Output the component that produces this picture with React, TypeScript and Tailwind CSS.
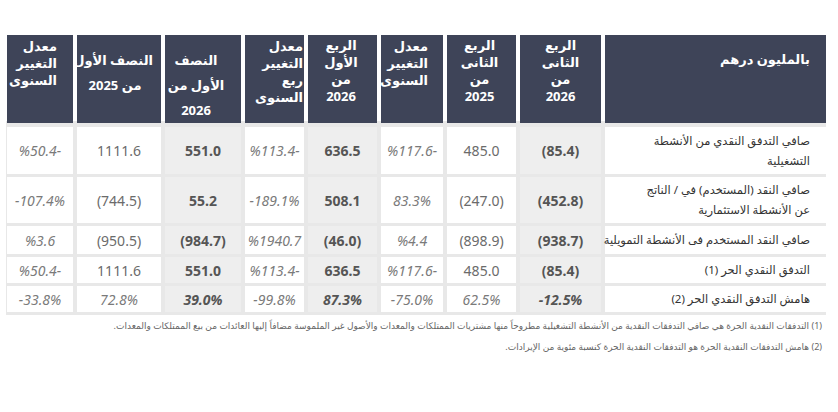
import React from "react";

type HeadCell = {
  lines: string[];
  className: string;
};

type Value = {
  text: string;
  kind: "plain" | "bold" | "italic" | "boldItalic";
};

type Row = {
  label: string[];
  height: string;
  values: Value[];
};

const cols = "grid grid-cols-[221px_81px_69px_62px_69px_59px_76px_84px_66px]";

// right to left, same order as the columns
const heads: HeadCell[] = [
  { lines: ["بالمليون درهم"], className: "pr-[16px] pt-[14px] text-right leading-[20px]" },
  { lines: ["الربع", "الثانى", "من", "2026"], className: "pt-[2px] text-center leading-[17px]" },
  { lines: ["الربع", "الثانى", "من", "2025"], className: "pt-[2px] pr-[4px] text-center leading-[17px]" },
  { lines: ["معدل", "التغيير", "السنوى"], className: "pt-[3px] pr-[15px] text-right leading-[17px]" },
  { lines: ["الربع", "الأول", "من", "2026"], className: "pt-[2px] pr-[3px] text-center leading-[17px]" },
  { lines: ["معدل", "التغيير", "ربع", "السنوى"], className: "pt-[3px] pr-[1px] text-right leading-[17px]" },
  { lines: ["النصف", "الأول من", "2026"], className: "pt-[13px] pr-[14px] text-center leading-[25px]" },
  { lines: ["النصف الأول", "من 2025"], className: "pt-[13px] pr-[8px] text-center leading-[25px]" },
  { lines: ["معدل", "التغيير", "السنوى"], className: "pt-[3px] pr-[16px] text-right leading-[17px]" },
];

// columns 1, 4 and 6 (2026 periods) are shaded
const shaded = [1, 4, 6];

const p = (text: string): Value => ({ text, kind: "plain" });
const b = (text: string): Value => ({ text, kind: "bold" });
const i = (text: string): Value => ({ text, kind: "italic" });
const bi = (text: string): Value => ({ text, kind: "boldItalic" });

const rows: Row[] = [
  {
    label: ["صافي التدفق النقدي من الأنشطة", "التشغيلية"],
    height: "h-[47px]",
    values: [b("(85.4)"), p("485.0"), i("%117.6-"), b("636.5"), i("%113.4-"), b("551.0"), p("1111.6"), i("%50.4-")],
  },
  {
    label: ["صافي النقد (المستخدم) في / الناتج", "عن الأنشطة الاستثمارية"],
    height: "h-[46px]",
    values: [b("(452.8)"), p("(247.0)"), i("83.3%"), b("508.1"), i("-189.1%"), b("55.2"), p("(744.5)"), i("-107.4%")],
  },
  {
    label: ["صافي النقد المستخدم فى الأنشطة التمويلية"],
    height: "h-[28px]",
    values: [b("(938.7)"), p("(898.9)"), i("%4.4"), b("(46.0)"), i("%1940.7"), b("(984.7)"), p("(950.5)"), i("%3.6")],
  },
  {
    label: ["التدفق النقدي الحر (1)"],
    height: "h-[26px]",
    values: [b("(85.4)"), p("485.0"), i("%117.6-"), b("636.5"), i("%113.4-"), b("551.0"), p("1111.6"), i("%50.4-")],
  },
  {
    label: ["هامش التدفق النقدي الحر (2)"],
    height: "h-[26px]",
    values: [bi("-12.5%"), i("62.5%"), i("-75.0%"), bi("87.3%"), i("-99.8%"), bi("39.0%"), i("72.8%"), i("-33.8%")],
  },
];

const valueStyle: Record<Value["kind"], string> = {
  plain: "text-[#6b6b6b]",
  bold: "font-bold text-[#555555]",
  italic: "italic text-[#7a7a7a]",
  boldItalic: "font-bold italic text-[#555555]",
};

export default function App() {
  return (
    <div
      dir="rtl"
      className="w-[838px] h-[412px] bg-white pt-[35px] pl-[6px] pr-[12px]"
      style={{ fontFamily: '"Noto Sans", "DejaVu Sans", sans-serif' }}
    >
      <div className="w-[820px]">
        <div className={`${cols} gap-x-[4px] h-[86px]`}>
          {heads.map((h, idx) => (
            <div key={idx} className={`bg-[#3e4458] text-white font-bold text-[13px] ${h.className}`}>
              {h.lines.map((line, j) => (
                <div key={j} className="whitespace-nowrap">{line}</div>
              ))}
            </div>
          ))}
        </div>

        <div className={`${cols} gap-x-[4px] gap-y-[3px] bg-[#e8e8e8] pt-[6px] pb-[3px]`}>
          {rows.map((row, r) => (
            <React.Fragment key={r}>
              <div className={`${row.height} bg-white flex flex-col justify-center pr-[16px] text-[11.5px] leading-[20px] text-[#333333]`}>
                {row.label.map((line, j) => (
                  <div key={j} className="whitespace-nowrap">{line}</div>
                ))}
              </div>
              {row.values.map((v, c) => (
                <div
                  key={c}
                  className={`${row.height} flex items-center justify-center text-[14px] ${
                    shaded.includes(c + 1) ? "bg-[#eeeeee]" : "bg-white"
                  } ${valueStyle[v.kind]}`}
                >
                  <span dir="ltr">{v.text}</span>
                </div>
              ))}
            </React.Fragment>
          ))}
        </div>

        <div className="pr-[4px] text-[9px] leading-[21px] text-[#666666] whitespace-nowrap">
          <p>
            (1) التدفقات النقدية الحرة هي صافي التدفقات النقدية من الأنشطة التشغيلية مطروحاً منها مشتريات الممتلكات والمعدات والأصول غير الملموسة مضافاً إليها العائدات من بيع الممتلكات والمعدات.
          </p>
          <p>(2) هامش التدفقات النقدية الحرة هو التدفقات النقدية الحرة كنسبة مئوية من الإيرادات.</p>
        </div>
      </div>
    </div>
  );
}
